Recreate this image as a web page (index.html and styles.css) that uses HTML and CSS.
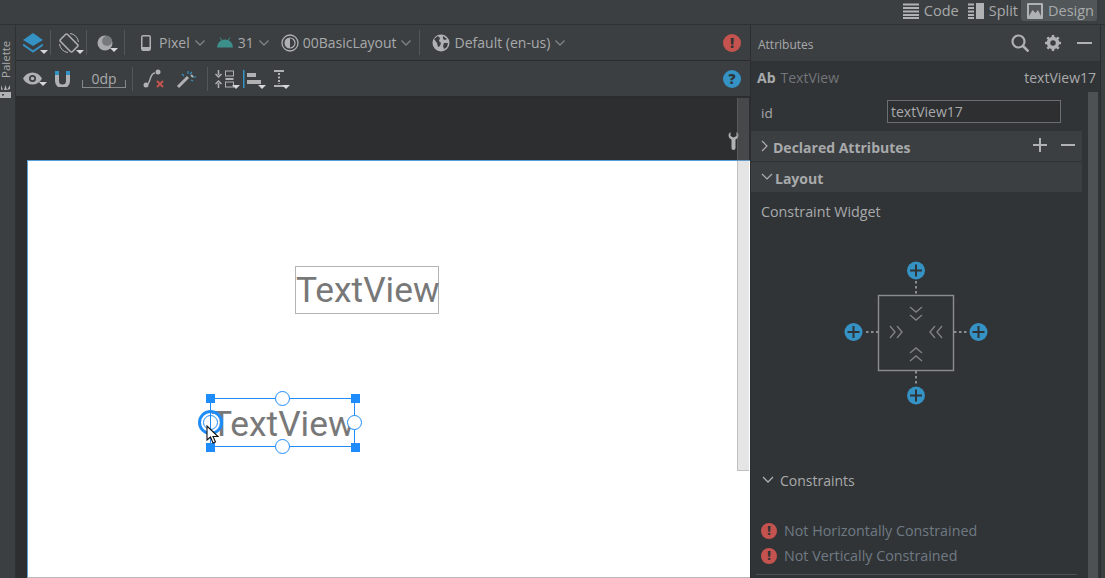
FILE: index.html
```html
<!DOCTYPE html>
<html lang="en">
  <head>
    <meta charset="UTF-8" />
    <title>Layout editor</title>
    <link rel="stylesheet" href="styles.css">
  </head>
  <body>
    <div class="topbar">
      <div class="tab tab-first">
        <svg width="16" height="16" viewBox="0 0 16 16"><path d="M0 1.500h16M0 5h16M0 8.500h16M0 12h16M0 15h16" stroke="#afb1b3" stroke-width="2"/></svg>
        <span>Code</span>
      </div>
      <div class="tab">
        <svg width="16" height="16" viewBox="0 0 16 16"><path d="M0 1.500h6M0 5h6M0 8.500h6M0 12h6M0 15h6" stroke="#afb1b3" stroke-width="2"/><rect x="8" y="0" width="8" height="16" fill="#afb1b3"/></svg>
        <span>Split</span>
      </div>
      <div class="tab tab-on">
        <svg width="16" height="16" viewBox="0 0 16 16"><rect x="0" y="0" width="16" height="16" rx="1" fill="#afb1b3"/><rect x="2" y="2" width="12" height="11" fill="#55595b"/><path d="M2 13l3.500-6 3 3 2.500-3 3 6z" fill="#afb1b3"/></svg>
        <span>Design</span>
      </div>
    </div>

    <div class="main">
      <div class="strip">
        <div class="strip-label">
          <svg width="11" height="13" viewBox="0 0 11 13"><path d="M0 0h11v6H0z" fill="#afb1b3"/><path d="M1 13l3-5-3 1zM5.500 13l1.500-5H4zM10 13V8.500L8 8z" fill="#afb1b3"/><rect x="7" y="2.500" width="2" height="1.500" fill="#3c3f41"/></svg>
          <span>Palette</span>
        </div>
      </div>

      <div class="editor">
        <div class="toolbar">
          <div class="tool w-layers">
            <svg width="20" height="20" viewBox="0 0 20 20"><path d="M10 0l10 7-10 6L0 7z" fill="#3592c4"/><path d="M0 11.500l10 7 10-7" fill="none" stroke="#3592c4" stroke-width="2"/></svg>
            <i class="drop"></i>
          </div>
          <b class="sep"></b>
          <div class="tool w-rotate">
            <svg width="20" height="20" viewBox="0 0 20 20"><rect x="5" y="1.500" width="10" height="17" rx="1.500" transform="rotate(-45 10 10)" fill="none" stroke="#afb1b3" stroke-width="1.500"/><path d="M11 .500a9.500 9.500 0 0 1 8.500 8.500M9 19.500A9.500 9.500 0 0 1 .500 11" fill="none" stroke="#afb1b3"/></svg>
            <i class="drop"></i>
          </div>
          <b class="sep"></b>
          <div class="tool w-theme">
            <svg width="16" height="16" viewBox="0 0 16 16"><circle cx="8" cy="8" r="7.500" fill="#a9abad"/><circle cx="10" cy="6" r="5" fill="#777a7c"/></svg>
            <i class="drop"></i>
          </div>
          <b class="sep"></b>
          <div class="item w-device">
            <svg width="10" height="16" viewBox="0 0 10 16"><rect x=".75" y=".75" width="8.500" height="14.500" rx="1.500" fill="none" stroke="#afb1b3" stroke-width="1.500"/><rect x="1" y="12" width="8" height="3" fill="#afb1b3"/></svg>
            <span>Pixel</span>
            <svg class="chev" width="10" height="6" viewBox="0 0 10 6"><path d="M.5.500L5 5 9.500.500" fill="none" stroke="#7f8385" stroke-width="1.300"/></svg>
          </div>
          <div class="item w-api">
            <svg width="16" height="11" viewBox="0 0 16 11"><path d="M0 10.500a8 8 0 0 1 16 0z" fill="#3d8f8c"/><path d="M3 .500l2 3M13 .500l-2 3" stroke="#3d8f8c"/></svg>
            <span>31</span>
            <svg class="chev" width="10" height="6" viewBox="0 0 10 6"><path d="M.5.500L5 5 9.500.500" fill="none" stroke="#7f8385" stroke-width="1.300"/></svg>
          </div>
          <div class="item w-name">
            <svg width="18" height="18" viewBox="0 0 18 18"><circle cx="9" cy="9" r="8" fill="none" stroke="#afb1b3" stroke-width="1.300"/><circle cx="9" cy="9" r="5" fill="none" stroke="#afb1b3" stroke-width="1.200"/><path d="M9 4a5 5 0 0 0 0 10z" fill="#afb1b3"/></svg>
            <span>00BasicLayout</span>
            <svg class="chev" width="10" height="6" viewBox="0 0 10 6"><path d="M.5.500L5 5 9.500.500" fill="none" stroke="#7f8385" stroke-width="1.300"/></svg>
          </div>
          <b class="sep"></b>
          <div class="item w-locale">
            <svg width="18" height="18" viewBox="0 0 18 18"><circle cx="9" cy="9" r="8.500" fill="#afb1b3"/><path d="M2 5l4-3 2 2-1 3 2 2-1 3-2 1-1-4zM11 2l4 3-2 1-2-1zM12 9l4 0-1 4-3 2-1-3z" fill="#3c3f41"/></svg>
            <span>Default (en-us)</span>
            <svg class="chev" width="10" height="6" viewBox="0 0 10 6"><path d="M.5.500L5 5 9.500.500" fill="none" stroke="#7f8385" stroke-width="1.300"/></svg>
          </div>
          <div class="round red bar-end">!</div>
        </div>

        <div class="toolbar toolbar-2">
          <div class="tool w-eye">
            <svg width="19" height="13" viewBox="0 0 19 13"><path d="M0 6.500c4-8 15-8 19 0-4 8-15 8-19 0z" fill="#afb1b3"/><circle cx="9.500" cy="6.500" r="3.500" fill="#3c3f41"/><circle cx="9.500" cy="6.500" r="1.800" fill="#afb1b3"/></svg>
            <i class="drop"></i>
          </div>
          <div class="tool w-magnet">
            <svg width="17" height="17" viewBox="0 0 17 17"><path d="M3 5v6a5.500 5.500 0 0 0 11 0V5" fill="none" stroke="#afb1b3" stroke-width="4"/><path d="M1 1h4v4H1zM12 1h4v4h-4z" fill="#3592c4"/></svg>
          </div>
          <div class="margin">0dp</div>
          <b class="sep sep-2"></b>
          <div class="tool w-clear">
            <svg width="22" height="20" viewBox="0 0 22 20"><path d="M3 16c5 0 3-12 9-12" fill="none" stroke="#afb1b3" stroke-width="1.500"/><circle cx="3" cy="16" r="2.500" fill="#afb1b3"/><circle cx="15" cy="3" r="2.500" fill="#afb1b3"/><path d="M14 12l6 6M20 12l-6 6" stroke="#c75450" stroke-width="1.800"/></svg>
          </div>
          <div class="tool w-wand">
            <svg width="20" height="20" viewBox="0 0 20 20"><path d="M2 18L12 8" stroke="#afb1b3" stroke-width="3"/><path d="M12 2v3M17 8h3M16 3l-2 2M6 5l2 2M17 12l-2-1" stroke="#3592c4" stroke-width="1.200"/><path d="M15 6l2 2" stroke="#afb1b3" stroke-width="2"/></svg>
          </div>
          <b class="sep sep-2"></b>
          <div class="tool w-pack">
            <svg width="20" height="18" viewBox="0 0 20 18"><path d="M3.500 0v5M.5 4l3 3 3-3M3.500 18v-5M.5 14l3-3 3 3" fill="none" stroke="#afb1b3" stroke-width="1.500"/><rect x="10.500" y="1" width="8" height="5" fill="none" stroke="#afb1b3"/><rect x="10.500" y="8" width="8" height="2" fill="#afb1b3"/><rect x="10.500" y="12" width="8" height="5" fill="none" stroke="#afb1b3"/></svg>
            <i class="drop"></i>
          </div>
          <div class="tool w-align">
            <svg width="18" height="18" viewBox="0 0 18 18"><rect x="0" y="0" width="1.500" height="18" fill="#3592c4"/><rect x="4" y="3" width="9" height="4" fill="#afb1b3"/><rect x="4" y="10" width="14" height="4" fill="#afb1b3"/></svg>
            <i class="drop"></i>
          </div>
          <div class="tool w-guide">
            <svg width="12" height="18" viewBox="0 0 12 18"><path d="M1 1h10M1 16h10" stroke="#afb1b3" stroke-width="2"/><path d="M6 3v11" stroke="#afb1b3" stroke-width="2" stroke-dasharray="2 1.500"/></svg>
            <i class="drop"></i>
          </div>
          <div class="round blue bar-end">?</div>
        </div>

        <div class="canvas">
          <svg class="wrench" width="11" height="18" viewBox="0 0 11 18"><path d="M2.500 0C0 1.500-.5 5.500 3.500 7.500V16a2 2 0 0 0 4 0V7.500C11.500 5.500 11 1.500 8.500 0v4l-3 1.500-3-1.500z" fill="#afb1b3"/></svg>
          <div class="surface">
            <div class="view view-plain">TextView</div>
            <div class="view view-selected">TextView</div>
            <i class="knob k-top"></i>
            <i class="knob k-bottom"></i>
            <i class="knob k-right"></i>
            <i class="knob k-left"></i>
            <i class="ring"></i>
            <i class="corner c-tl"></i>
            <i class="corner c-tr"></i>
            <i class="corner c-bl"></i>
            <i class="corner c-br"></i>
            <svg class="cursor" width="14" height="20" viewBox="0 0 14 20"><path d="M1 1v14l3.500-3 2.500 6 2.500-1-2.500-5.500H12z" fill="#fff" stroke="#111" stroke-width="1.100"/></svg>
          </div>
          <div class="canvas-scroll"></div>
        </div>
      </div>

      <div class="panel">
        <div class="panel-head">
          <span class="panel-title">Attributes</span>
          <svg width="18" height="18" viewBox="0 0 18 18"><circle cx="7.500" cy="7.500" r="6" fill="none" stroke="#afb1b3" stroke-width="2.200"/><path d="M12 12l5.500 5.500" stroke="#afb1b3" stroke-width="2.500"/></svg>
          <svg width="16" height="16" viewBox="0 0 16 16"><circle cx="8" cy="8" r="4.500" fill="none" stroke="#afb1b3" stroke-width="3.500"/><path d="M8 0v16M0 8h16M2.300 2.300l11.400 11.400M13.700 2.300L2.300 13.700" stroke="#afb1b3" stroke-width="2.600" stroke-dasharray="3 10 3 0"/></svg>
          <svg width="15" height="16" viewBox="0 0 15 16"><path d="M0 8h15" stroke="#afb1b3" stroke-width="2"/></svg>
        </div>
        <div class="panel-body">
          <div class="panel-main">
            <div class="view-row">
              <b>Ab</b><span class="view-type">TextView</span><span class="view-id">textView17</span>
            </div>
            <div class="id-row"><span>id</span><div class="id-input">textView17</div></div>
            <div class="section">
              <svg width="8" height="12" viewBox="0 0 8 12"><path d="M1 1l5 5-5 5" fill="none" stroke="#afb1b3" stroke-width="1.200"/></svg>
              <strong>Declared Attributes</strong>
              <svg class="sec-btn" width="14" height="14" viewBox="0 0 14 14"><path d="M7 0v14M0 7h14" stroke="#afb1b3" stroke-width="2"/></svg>
              <svg class="sec-last" width="14" height="14" viewBox="0 0 14 14"><path d="M0 7h14" stroke="#afb1b3" stroke-width="2"/></svg>
            </div>
            <div class="section section-2">
              <svg width="12" height="8" viewBox="0 0 12 8"><path d="M1 1l5 5 5-5" fill="none" stroke="#afb1b3" stroke-width="1.200"/></svg>
              <strong>Layout</strong>
            </div>
            <div class="sub-label">Constraint Widget</div>
            <div class="widget">
              <svg width="150" height="150" viewBox="0 0 150 150">
                <g fill="none" stroke="#8b8d8e" stroke-width="1.400">
                  <rect x="38.500" y="38.500" width="75" height="75"/>
                  <path d="M70 50l6 5 6-5M70 58l6 5 6-5M70 96l6-5 6 5M70 104l6-5 6 5M50 69l5 6-5 6M57 69l5 6-5 6M102 69l-5 6 5 6M95 69l-5 6 5 6" stroke="#7f8183"/>
                </g>
                <path d="M76 24v14M76 114v14M26 75h12M114 75h14" stroke="#8b8d8e" stroke-width="2" stroke-dasharray="2.500 2.500"/>
                <g fill="#3592c4">
                  <circle cx="76" cy="13.500" r="9"/><circle cx="76" cy="138.500" r="9"/><circle cx="13.500" cy="75" r="9"/><circle cx="138.500" cy="75" r="9"/>
                </g>
                <path d="M76 7.500v12M70 13.500h12M76 132.500v12M70 138.500h12M13.500 69v12M7.500 75h12M138.500 69v12M132.500 75h12" stroke="#313436" stroke-width="2"/>
              </svg>
            </div>
            <div class="sub-head">
              <svg width="12" height="8" viewBox="0 0 12 8"><path d="M1 1l5 5 5-5" fill="none" stroke="#afb1b3" stroke-width="1.300"/></svg>
              <span>Constraints</span>
            </div>
            <div class="warn"><i class="round red small">!</i><span>Not Horizontally Constrained</span></div>
            <div class="warn"><i class="round red small">!</i><span>Not Vertically Constrained</span></div>
            <div class="rule"></div>
          </div>
          <div class="panel-scroll"></div>
        </div>
      </div>
    </div>
  </body>
</html>
```

FILE: styles.css
```css
* {
  margin: 0;
  padding: 0;
  box-sizing: border-box;
}
html,
body {
  width: 1105px;
  height: 578px;
  overflow: hidden;
}
body {
  background-color: #3c3f41;
  color: #a8aaac;
  font-family: "Open Sans", "Noto Sans", sans-serif;
  font-size: 14px;
  display: flex;
  flex-direction: column;
}

/* top tabs */
.topbar {
  height: 25px;
  flex: none;
  display: flex;
  justify-content: flex-end;
  align-items: flex-start;
  padding-right: 8px;
  border-bottom: 1px solid #2f3234;
}
.tab {
  height: 21px;
  display: flex;
  align-items: center;
  gap: 5px;
  padding: 0 3px 0 5px;
  font-size: 14.500px;
  color: #a8aaac;
}
.tab-first {
  margin-right: 1px;
}
.tab-on {
  background-color: #515658;
  border-radius: 0 0 3px 3px;
  padding: 0 3px 0 6px;
}

.main {
  flex: 1;
  display: flex;
  min-height: 0;
}

/* palette strip */
.strip {
  width: 16px;
  flex: none;
  border-right: 1px solid #2f3234;
  background-color: #3c3f41;
}
.strip-label {
  writing-mode: vertical-rl;
  transform: rotate(180deg);
  display: flex;
  align-items: center;
  gap: 7px;
  height: 58px;
  margin-top: 15px;
  width: 11px;
  font-size: 11.500px;
  line-height: 11px;
  color: #a8aaac;
}

/* middle column */
.editor {
  width: 735px;
  flex: none;
  display: flex;
  flex-direction: column;
  border-right: 1px solid #2b2d2f;
}
.toolbar {
  height: 36px;
  flex: none;
  display: flex;
  align-items: center;
  border-bottom: 1px solid #2a2c2e;
  padding-left: 7px;
}
.tool {
  position: relative;
  display: flex;
  align-items: center;
}
.drop {
  position: absolute;
  right: -5px;
  bottom: -1px;
  border-left: 4px solid transparent;
  border-right: 4px solid transparent;
  border-top: 4px solid #d4d6d7;
}
.sep {
  width: 1px;
  height: 25px;
  background-color: #53575a;
  flex: none;
}
.sep-2 {
  height: 24px;
}
.w-layers { margin-right: 7px; }
.w-rotate { margin: 0 7px 0 8px; }
.w-theme { margin: 0 11px 0 10px; }
.item {
  display: flex;
  align-items: center;
  gap: 5px;
  font-size: 14px;
  color: #a8aaac;
}
.w-device { margin-left: 16px; gap: 8px; }
.w-device .chev { margin-left: -3px; }
.w-api { margin-left: 12px; }
.w-name { margin-left: 12px; margin-right: 8px; gap: 4px; }
.w-locale { margin-left: 12px; }
.bar-end {
  margin-left: auto;
  margin-right: 9px;
}
.round {
  width: 18px;
  height: 18px;
  border-radius: 50%;
  flex: none;
  color: #2f3234;
  font-size: 14px;
  font-weight: 800;
  font-style: normal;
  line-height: 18px;
  text-align: center;
}
.red { background-color: #c4534f; }
.blue { background-color: #3592c4; }

.toolbar-2 {
  padding-left: 7px;
}
.w-magnet { margin-left: 12px; }
.margin {
  width: 44px;
  height: 17px;
  margin-left: 11px;
  margin-right: 6px;
  margin-top: 1px;
  text-align: center;
  font-size: 14px;
  line-height: 15px;
  color: #a8aaac;
  position: relative;
  border-bottom: 1px solid #85888a;
}
/* end ticks of the little ruler under the value */
.margin::before,
.margin::after {
  content: "";
  position: absolute;
  bottom: -1px;
  width: 1px;
  height: 8px;
  background-color: #85888a;
}
.margin::before { left: 0; }
.margin::after { right: 0; }
.w-clear { margin-left: 10px; }
.w-wand { margin-left: 11px; margin-right: 11px; }
.w-pack { margin-left: 7px; }
.w-align { margin-left: 8px; }
.w-guide { margin-left: 12px; }

/* design canvas */
.canvas {
  flex: 1;
  position: relative;
  background-color: #2d2e30;
  overflow: hidden;
}
.surface {
  position: absolute;
  left: 11px;
  top: 63px;
  width: 730px;
  height: 418px;
  background-color: #fff;
  border-top: 1px solid #5a9ed6;
  border-left: 1px solid #5a9ed6;
  border-bottom: 1px solid #b9b9b9;
}
.canvas-scroll {
  position: absolute;
  left: 721px;
  top: 1px;
  width: 12px;
  height: 373px;
  background-color: rgba(150, 150, 150, 0.25);
  border-left: 1px solid rgba(120, 120, 120, 0.35);
  border-bottom: 1px solid rgba(120, 120, 120, 0.35);
}
.wrench {
  position: absolute;
  left: 712px;
  top: 35px;
}
.view {
  position: absolute;
  font-family: "Roboto", sans-serif;
  font-size: 35.300px;
  color: #787878;
  white-space: nowrap;
}
.view-plain {
  left: 267px;
  top: 105px;
  width: 144px;
  height: 48px;
  line-height: 47px;
  border: 1px solid #b4b4b4;
  text-align: center;
}
.view-selected {
  left: 182px;
  top: 237px;
  width: 145px;
  height: 49px;
  line-height: 50px;
  border: 1px solid #1e8cfa;
  text-align: center;
}
.knob {
  position: absolute;
  width: 15px;
  height: 15px;
  border-radius: 50%;
  border: 1.500px solid #1e8cfa;
  background-color: #fff;
}
.k-top { left: 247px; top: 230px; }
.k-bottom { left: 247px; top: 278px; }
.k-right { left: 319px; top: 254px; }
.k-left { left: 175px; top: 254px; background: transparent; }
.ring {
  position: absolute;
  left: 170px;
  top: 249px;
  width: 25px;
  height: 25px;
  border-radius: 50%;
  border: 3.500px solid #1e8cfa;
}
.corner {
  position: absolute;
  width: 9px;
  height: 9px;
  background-color: #1e8cfa;
}
.c-tl { left: 178px; top: 233px; }
.c-tr { left: 323px; top: 233px; }
.c-bl { left: 178px; top: 282px; }
.c-br { left: 323px; top: 282px; }
.cursor {
  position: absolute;
  left: 178px;
  top: 264px;
}

/* attributes panel */
.panel {
  width: 350px;
  flex: none;
  display: flex;
  flex-direction: column;
  background-color: #313436;
  border-right: 1px solid #2a2c2e;
}
.panel-head {
  height: 36px;
  flex: none;
  display: flex;
  align-items: center;
  gap: 16px;
  padding: 0 8px 0 7px;
  background-color: #3c3f41;
}
.panel-title {
  font-size: 12px;
  padding-top: 2px;
  margin-right: auto;
  color: #a8aaac;
}
.panel-body {
  flex: 1;
  display: flex;
  min-height: 0;
}
.panel-main {
  width: 331px;
  flex: none;
}
.panel-scroll {
  width: 10px;
  margin: 31px 0 0 6px;
  background-color: #4d5153;
}
.view-row {
  height: 31px;
  display: flex;
  align-items: center;
  padding: 1px 0 0 6px;
  font-size: 14px;
  margin-right: -14px;
}
.view-row b {
  font-size: 14px;
  margin-right: 5px;
  color: #a8aaac;
}
.view-type { color: #72767a; }
.view-id {
  margin-left: auto;
  color: #a8aaac;
}
.id-row {
  height: 39px;
  display: flex;
  align-items: center;
  padding-left: 10px;
}
.id-row span {
  width: 126px;
  padding-top: 3px;
  font-size: 13.500px;
  color: #a8aaac;
}
.id-input {
  width: 174px;
  height: 23px;
  border: 1px solid #6b6f71;
  background-color: #2d2f31;
  padding-left: 3px;
  line-height: 22px;
  font-size: 14px;
  color: #a8aaac;
}
.section {
  height: 31px;
  display: flex;
  align-items: center;
  gap: 4px;
  padding: 0 7px 0 10px;
  background-color: #3c3f41;
  border-bottom: 1px solid #313436;
}
.section strong {
  font-size: 14px;
  padding-top: 2px;
  color: #a8aaac;
  margin-right: auto;
}
.sec-btn {
  margin: -3px 10px 0 0;
}
.sec-last {
  margin-top: -3px;
}
.section-2 {
  gap: 2px;
  border-bottom: none;
  height: 30px;
}
.sub-label {
  padding: 10px 0 0 10px;
  font-size: 14.300px;
  color: #a8aaac;
}
.widget {
  display: flex;
  padding: 36px 0 0 89px;
  height: 239px;
}
.sub-head {
  height: 40px;
  display: flex;
  align-items: center;
  gap: 6px;
  padding-left: 11px;
  margin-bottom: 18px;
  font-size: 14px;
  color: #a8aaac;
}
.warn {
  height: 25px;
  display: flex;
  align-items: center;
  gap: 7px;
  padding-left: 10px;
  font-size: 14.300px;
  color: #6f7a84;
}
.round.small {
  width: 16px;
  height: 16px;
  line-height: 16px;
  font-size: 12px;
}
.rule {
  height: 1px;
  margin: 6px 5px 0 5px;
  background-color: #4d5153;
}
```
